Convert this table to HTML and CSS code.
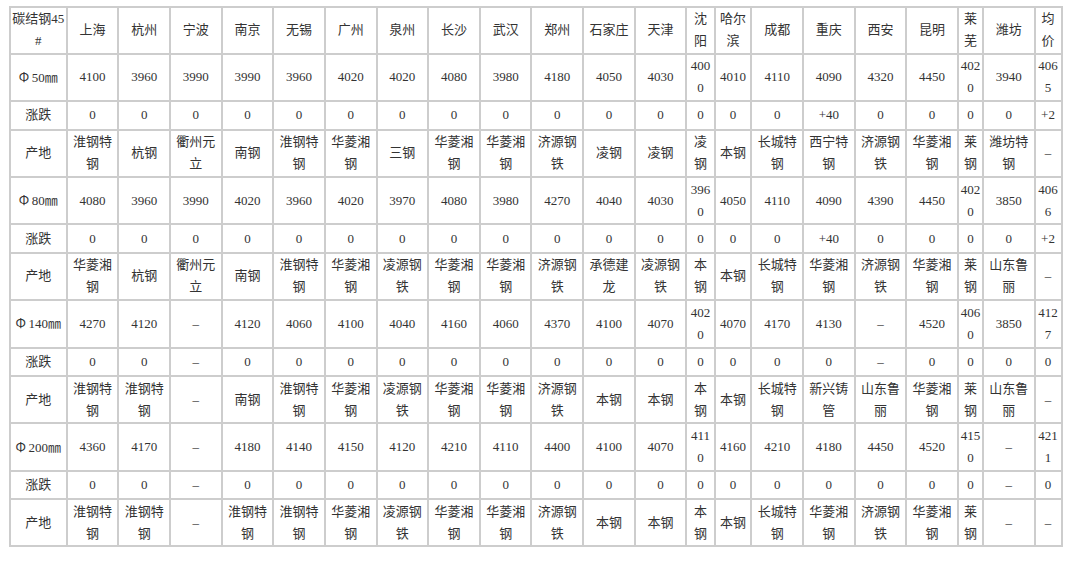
FILE: index.html
```html
<!DOCTYPE html>
<html lang="zh-CN">
<head>
<meta charset="utf-8">
<title>碳结钢45#价格</title>
<link rel="stylesheet" href="styles.css">
</head>
<body>
<div class="wrap">
<table class="price">
<colgroup>
<col class="c-label"><col class="c-n"><col class="c-n"><col class="c-n"><col class="c-n"><col class="c-n"><col class="c-n"><col class="c-n"><col class="c-n"><col class="c-n"><col class="c-n"><col class="c-n"><col class="c-n"><col class="c-sy"><col class="c-heb"><col class="c-n"><col class="c-n"><col class="c-n"><col class="c-n"><col class="c-lw"><col class="c-n"><col class="c-avg">
</colgroup>
<tr class="hd">
<td>碳结钢45<br>#</td><td>上海</td><td>杭州</td><td>宁波</td><td>南京</td><td>无锡</td><td>广州</td><td>泉州</td><td>长沙</td><td>武汉</td><td>郑州</td><td>石家庄</td><td>天津</td><td>沈<br>阳</td><td>哈尔<br>滨</td><td>成都</td><td>重庆</td><td>西安</td><td>昆明</td><td>莱<br>芜</td><td>潍坊</td><td>均<br>价</td>
</tr>
<tr class="d">
<td><span class="phi">Φ</span>50㎜</td><td>4100</td><td>3960</td><td>3990</td><td>3990</td><td>3960</td><td>4020</td><td>4020</td><td>4080</td><td>3980</td><td>4180</td><td>4050</td><td>4030</td><td>400<br>0</td><td>4010</td><td>4110</td><td>4090</td><td>4320</td><td>4450</td><td>402<br>0</td><td>3940</td><td>406<br>5</td>
</tr>
<tr class="s">
<td>涨跌</td><td>0</td><td>0</td><td>0</td><td>0</td><td>0</td><td>0</td><td>0</td><td>0</td><td>0</td><td>0</td><td>0</td><td>0</td><td>0</td><td>0</td><td>0</td><td>+40</td><td>0</td><td>0</td><td>0</td><td>0</td><td>+2</td>
</tr>
<tr class="d">
<td>产地</td><td>淮钢特<br>钢</td><td>杭钢</td><td>衢州元<br>立</td><td>南钢</td><td>淮钢特<br>钢</td><td>华菱湘<br>钢</td><td>三钢</td><td>华菱湘<br>钢</td><td>华菱湘<br>钢</td><td>济源钢<br>铁</td><td>凌钢</td><td>凌钢</td><td>凌<br>钢</td><td>本钢</td><td>长城特<br>钢</td><td>西宁特<br>钢</td><td>济源钢<br>铁</td><td>华菱湘<br>钢</td><td>莱<br>钢</td><td>潍坊特<br>钢</td><td>–</td>
</tr>
<tr class="d">
<td><span class="phi">Φ</span>80㎜</td><td>4080</td><td>3960</td><td>3990</td><td>4020</td><td>3960</td><td>4020</td><td>3970</td><td>4080</td><td>3980</td><td>4270</td><td>4040</td><td>4030</td><td>396<br>0</td><td>4050</td><td>4110</td><td>4090</td><td>4390</td><td>4450</td><td>402<br>0</td><td>3850</td><td>406<br>6</td>
</tr>
<tr class="s">
<td>涨跌</td><td>0</td><td>0</td><td>0</td><td>0</td><td>0</td><td>0</td><td>0</td><td>0</td><td>0</td><td>0</td><td>0</td><td>0</td><td>0</td><td>0</td><td>0</td><td>+40</td><td>0</td><td>0</td><td>0</td><td>0</td><td>+2</td>
</tr>
<tr class="d">
<td>产地</td><td>华菱湘<br>钢</td><td>杭钢</td><td>衢州元<br>立</td><td>南钢</td><td>淮钢特<br>钢</td><td>华菱湘<br>钢</td><td>凌源钢<br>铁</td><td>华菱湘<br>钢</td><td>华菱湘<br>钢</td><td>济源钢<br>铁</td><td>承德建<br>龙</td><td>凌源钢<br>铁</td><td>本<br>钢</td><td>本钢</td><td>长城特<br>钢</td><td>华菱湘<br>钢</td><td>济源钢<br>铁</td><td>华菱湘<br>钢</td><td>莱<br>钢</td><td>山东鲁<br>丽</td><td>–</td>
</tr>
<tr class="d">
<td><span class="phi">Φ</span>140㎜</td><td>4270</td><td>4120</td><td>–</td><td>4120</td><td>4060</td><td>4100</td><td>4040</td><td>4160</td><td>4060</td><td>4370</td><td>4100</td><td>4070</td><td>402<br>0</td><td>4070</td><td>4170</td><td>4130</td><td>–</td><td>4520</td><td>406<br>0</td><td>3850</td><td>412<br>7</td>
</tr>
<tr class="s">
<td>涨跌</td><td>0</td><td>0</td><td>–</td><td>0</td><td>0</td><td>0</td><td>0</td><td>0</td><td>0</td><td>0</td><td>0</td><td>0</td><td>0</td><td>0</td><td>0</td><td>0</td><td>–</td><td>0</td><td>0</td><td>0</td><td>0</td>
</tr>
<tr class="d">
<td>产地</td><td>淮钢特<br>钢</td><td>淮钢特<br>钢</td><td>–</td><td>南钢</td><td>淮钢特<br>钢</td><td>华菱湘<br>钢</td><td>凌源钢<br>铁</td><td>华菱湘<br>钢</td><td>华菱湘<br>钢</td><td>济源钢<br>铁</td><td>本钢</td><td>本钢</td><td>本<br>钢</td><td>本钢</td><td>长城特<br>钢</td><td>新兴铸<br>管</td><td>山东鲁<br>丽</td><td>华菱湘<br>钢</td><td>莱<br>钢</td><td>山东鲁<br>丽</td><td>–</td>
</tr>
<tr class="d">
<td><span class="phi">Φ</span>200㎜</td><td>4360</td><td>4170</td><td>–</td><td>4180</td><td>4140</td><td>4150</td><td>4120</td><td>4210</td><td>4110</td><td>4400</td><td>4100</td><td>4070</td><td>411<br>0</td><td>4160</td><td>4210</td><td>4180</td><td>4450</td><td>4520</td><td>415<br>0</td><td>–</td><td>421<br>1</td>
</tr>
<tr class="s">
<td>涨跌</td><td>0</td><td>0</td><td>–</td><td>0</td><td>0</td><td>0</td><td>0</td><td>0</td><td>0</td><td>0</td><td>0</td><td>0</td><td>0</td><td>0</td><td>0</td><td>0</td><td>0</td><td>0</td><td>0</td><td>–</td><td>0</td>
</tr>
<tr class="d">
<td>产地</td><td>淮钢特<br>钢</td><td>淮钢特<br>钢</td><td>–</td><td>淮钢特<br>钢</td><td>淮钢特<br>钢</td><td>华菱湘<br>钢</td><td>凌源钢<br>铁</td><td>华菱湘<br>钢</td><td>华菱湘<br>钢</td><td>济源钢<br>铁</td><td>本钢</td><td>本钢</td><td>本<br>钢</td><td>本钢</td><td>长城特<br>钢</td><td>华菱湘<br>钢</td><td>济源钢<br>铁</td><td>华菱湘<br>钢</td><td>莱<br>钢</td><td>–</td><td>–</td>
</tr>
</table>
</div>
</body>
</html>
```
FILE: styles.css
```css
html, body {
  margin: 0;
  padding: 0;
  background: #ffffff;
}

.wrap {
  padding: 6px 0 0 9px;
}

.price {
  table-layout: fixed;
  border-collapse: separate;
  border-spacing: 0;
  width: 1053.5px;
  border-top: 2px solid #cdcdcd;
  border-left: 2px solid #cdcdcd;
  font-family: "Liberation Serif", "Noto Sans CJK SC", serif;
  font-size: 13px;
  color: #333333;
}

.price td {
  box-sizing: border-box;
  border-right: 2px solid #cdcdcd;
  border-bottom: 2px solid #cdcdcd;
  padding: 0;
  text-align: center;
  vertical-align: middle;
  line-height: 22px;
  white-space: nowrap;
  overflow: hidden;
}

.c-label { width: 56.7px; }
.c-n { width: 51.65px; }
.c-sy { width: 28.3px; }
.c-heb { width: 36.7px; }
.c-lw { width: 25px; }
.c-avg { width: 26.7px; }

.hd { height: 46.8px; }
.d { height: 47.4px; }
.s { height: 28.4px; }

.phi {
  font-family: "Noto Sans CJK SC", sans-serif;
  display: inline-block;
  width: 13px;
  text-align: left;
}
```
